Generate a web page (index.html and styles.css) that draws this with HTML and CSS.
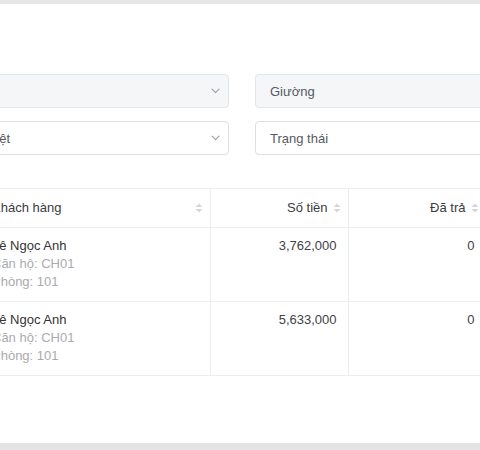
FILE: index.html
```html
<!DOCTYPE html>
<html lang="vi">
<head>
<meta charset="utf-8">
<title>Hóa đơn</title>
<link rel="stylesheet" href="styles.css">
</head>
<body>
<div class="topbar"></div>
<main class="panel">
  <div class="filters">
    <div class="field disabled">
      <span class="value"></span>
      <svg class="chev" width="9" height="6" viewBox="0 0 9 6"><path d="M1 1.2 L4.5 4.6 L8 1.2" fill="none" stroke="#9a9da5" stroke-width="1.1" stroke-linecap="round" stroke-linejoin="round"/></svg>
    </div>
    <div class="field disabled">
      <span class="value">Giường</span>
    </div>
    <div class="field">
      <span class="value">Đã duyệt</span>
      <svg class="chev" width="9" height="6" viewBox="0 0 9 6"><path d="M1 1.2 L4.5 4.6 L8 1.2" fill="none" stroke="#9a9da5" stroke-width="1.1" stroke-linecap="round" stroke-linejoin="round"/></svg>
    </div>
    <div class="field">
      <span class="value">Trạng thái</span>
    </div>
  </div>

  <table class="grid">
    <colgroup>
      <col class="c-name">
      <col class="c-num">
      <col class="c-num">
      <col class="c-extra">
    </colgroup>
    <thead>
      <tr>
        <th class="left"><div class="th-in"><span>Khách hàng</span><svg class="sort" width="8" height="10" viewBox="0 0 8 10"><path d="M0.5 4 L4 0.5 L7.5 4 Z M0.5 6 L4 9.5 L7.5 6 Z" fill="#d3d6dd"/></svg></div></th>
        <th class="right"><div class="th-in"><span>Số tiền</span><svg class="sort" width="8" height="10" viewBox="0 0 8 10"><path d="M0.5 4 L4 0.5 L7.5 4 Z M0.5 6 L4 9.5 L7.5 6 Z" fill="#d3d6dd"/></svg></div></th>
        <th class="right"><div class="th-in"><span>Đã trả</span><svg class="sort" width="8" height="10" viewBox="0 0 8 10"><path d="M0.5 4 L4 0.5 L7.5 4 Z M0.5 6 L4 9.5 L7.5 6 Z" fill="#d3d6dd"/></svg></div></th>
        <th class="right"><div class="th-in"><span>Còn lại</span></div></th>
      </tr>
    </thead>
    <tbody>
      <tr>
        <td class="left">
          <div class="name">Lê Ngọc Anh</div>
          <div class="sub">Căn hộ: CH01</div>
          <div class="sub">Phòng: 101</div>
        </td>
        <td class="right num">3,762,000</td>
        <td class="right num">0</td>
        <td class="right num">3,762,000</td>
      </tr>
      <tr>
        <td class="left">
          <div class="name">Lê Ngọc Anh</div>
          <div class="sub">Căn hộ: CH01</div>
          <div class="sub">Phòng: 101</div>
        </td>
        <td class="right num">5,633,000</td>
        <td class="right num">0</td>
        <td class="right num">5,633,000</td>
      </tr>
    </tbody>
  </table>
</main>
<div class="bottombar"></div>
</body>
</html>
```
FILE: styles.css
```css
html, body {
  margin: 0;
  padding: 0;
}

body {
  width: 480px;
  height: 450px;
  overflow: hidden;
  background: #ffffff;
  font-family: "Liberation Sans", Arial, sans-serif;
  font-size: 13px;
  color: #333333;
  display: flex;
  flex-direction: column;
}

.topbar {
  flex: none;
  height: 4px;
  background: #e6e6e6;
}

.bottombar {
  flex: none;
  height: 7px;
  background: #e4e4e4;
}

.panel {
  flex: 1;
  min-height: 0;
  margin-left: -18px;
  padding-top: 70px;
}

.filters {
  display: grid;
  grid-template-columns: 286px 286px;
  column-gap: 26px;
  row-gap: 13px;
  margin-left: -39px;
}

.field {
  height: 34px;
  box-sizing: border-box;
  border: 1px solid #dcdfe6;
  border-radius: 4px;
  background: #ffffff;
  display: flex;
  align-items: center;
  padding: 0 8px 0 14px;
  color: #555a63;
}

.field.disabled {
  background: #f5f6f8;
  border-color: #e3e5ea;
}

.value {
  flex: 1;
  white-space: nowrap;
}

.chev {
  flex: none;
  display: block;
}

.grid {
  margin-top: 33px;
  border-collapse: collapse;
  table-layout: fixed;
  width: 655px;
  border-top: 1px solid #ebedf3;
}

.c-name { width: 228px; }
.c-num { width: 138px; }
.c-extra { width: 151px; }

.grid th,
.grid td {
  border-bottom: 1px solid #ebedf3;
  border-right: 1px solid #ebedf3;
  line-height: 18px;
  vertical-align: top;
  white-space: nowrap;
  text-align: left;
}

.grid th {
  font-weight: normal;
  color: #3a3c40;
  padding: 10px 7px 10px 10px;
}

.th-in {
  display: flex;
  align-items: center;
  gap: 5px;
}

th.left .th-in span { flex: 1; }
th.right .th-in { justify-content: flex-end; }

.sort {
  flex: none;
  display: block;
}

.grid td {
  padding: 9px 11px 10px 10px;
}

.grid td.right {
  text-align: right;
}

.name {
  color: #333333;
}

.sub {
  color: #a9abb0;
}

.num {
  color: #3f4146;
}
```
